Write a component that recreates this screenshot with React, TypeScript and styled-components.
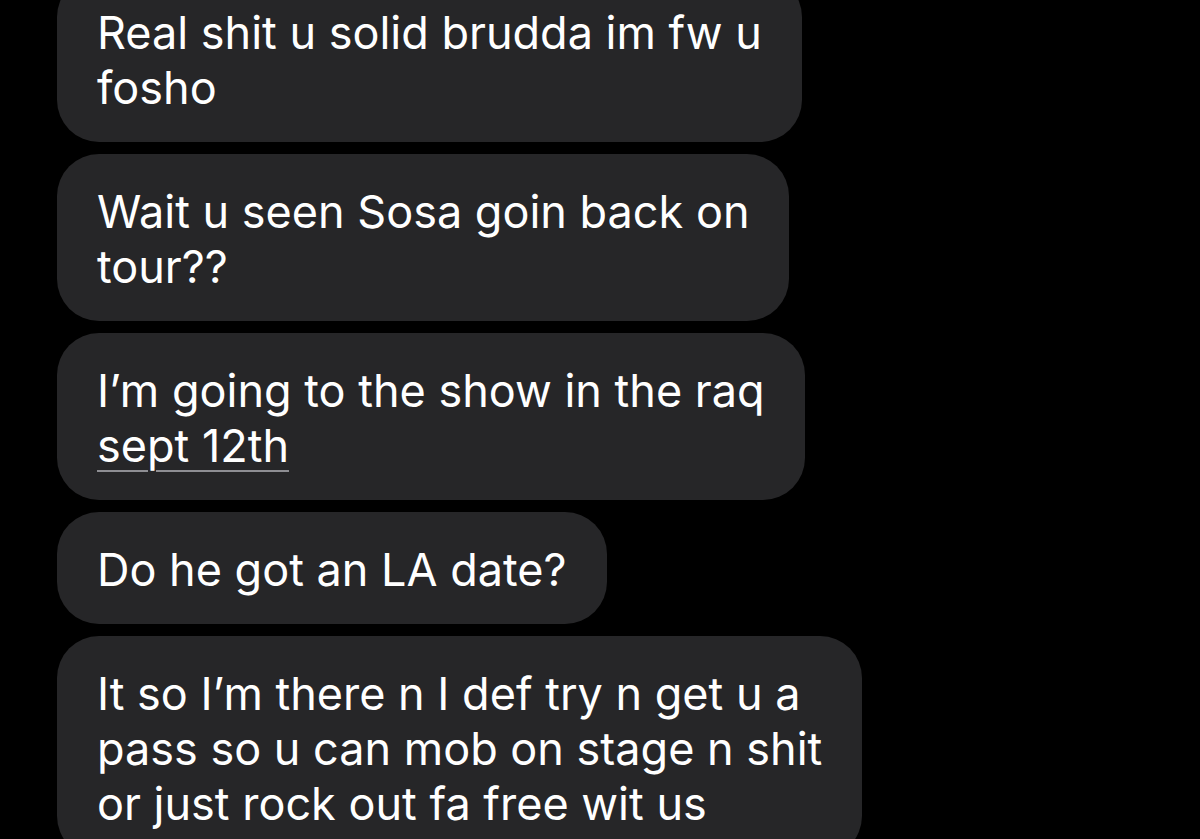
import React from "react";
import styled, { createGlobalStyle } from "styled-components";

const Global = createGlobalStyle`
  html, body { margin: 0; padding: 0; background: #000; }
  body { width: 1200px; height: 839px; overflow: hidden; }
`;

const Thread = styled.div`
  display: flex;
  flex-direction: column;
  align-items: flex-start;
  gap: 12px;
  padding-left: 57px;
  margin-top: -25px;
  font-family: Inter, "Noto Sans", sans-serif;
`;

const Bubble = styled.div`
  background: #262628;
  color: #fff;
  border-radius: 42px;
  padding: 30px 40px 27px 40px;
  font-size: 45px;
  line-height: 55px;
  letter-spacing: 0;
`;

const Line = styled.div`
  white-space: nowrap;
`;

const DateLink = styled.span`
  text-decoration: underline;
  text-decoration-color: #8e8e93;
  text-decoration-thickness: 2px;
  text-underline-offset: 8px;
  text-decoration-skip-ink: auto;
`;

const messages: React.ReactNode[][] = [
  ["Real shit u solid brudda im fw u", "fosho"],
  ["Wait u seen Sosa goin back on", "tour??"],
  ["I\u2019m going to the show in the raq", <DateLink key="d">sept 12th</DateLink>],
  ["Do he got an LA date?"],
  [
    "It so I\u2019m there n I def try n get u a",
    "pass so u can mob on stage n shit",
    "or just rock out fa free wit us",
  ],
];

export default function App() {
  return (
    <>
      <Global />
      <Thread>
        {messages.map((lines, i) => (
          <Bubble key={i}>
            {lines.map((l, j) => (
              <Line key={j}>{l}</Line>
            ))}
          </Bubble>
        ))}
      </Thread>
    </>
  );
}
